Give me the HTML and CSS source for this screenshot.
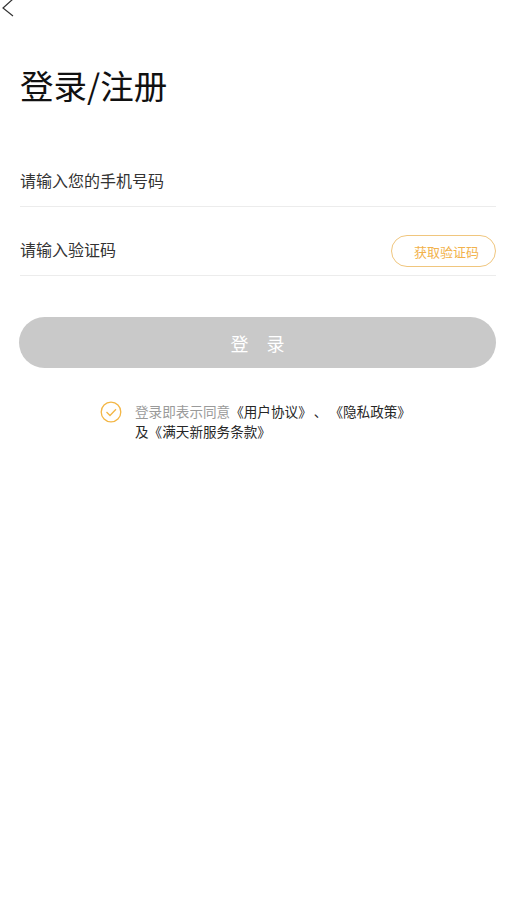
FILE: index.html
```html
<!DOCTYPE html>
<html lang="zh-CN">
<head>
<meta charset="utf-8">
<title>登录/注册</title>
<link rel="stylesheet" href="styles.css">
</head>
<body>
<div class="page">
  <div class="topbar">
    <svg class="back" width="16" height="18" viewBox="0 0 16 18"><path d="M13 -1 L3 8 L13 16" fill="none" stroke="#333" stroke-width="1.2"/></svg>
  </div>
  <h1 class="title">登录/注册</h1>
  <div class="form">
    <div class="field">
      <span class="placeholder">请输入您的手机号码</span>
    </div>
    <div class="field">
      <span class="placeholder">请输入验证码</span>
      <span class="code-btn">获取验证码</span>
    </div>
    <div class="login-btn"><span>登</span><span>录</span></div>
  </div>
  <div class="agree">
    <svg class="check" width="22" height="22" viewBox="0 0 22 22"><circle cx="11" cy="11" r="9.8" fill="none" stroke="#f3b645" stroke-width="1.3"/><path d="M6.5 11 L10 14.5 L16 8.2" fill="none" stroke="#f3b645" stroke-width="1.3"/></svg>
    <p class="agree-text"><span class="muted">登录即表示同意</span>《用户协议》<span class="comma">、</span>《隐私政策》<br>及《满天新服务条款》</p>
  </div>
</div>
</body>
</html>
```

FILE: styles.css
```css
* { box-sizing: border-box; }
html, body { margin: 0; padding: 0; background: #fff; }
body {
  font-family: "Noto Sans CJK SC", "Noto Sans", sans-serif;
  color: #333;
  text-spacing-trim: space-all;
  font-feature-settings: "halt" 0, "chws" 0;
}
.page { width: 510px; min-height: 911px; }
.topbar { height: 20px; }
.back { display: block; }
.title {
  margin: 0;
  padding: 41px 0 0 20px;
  height: 118px;
  font-size: 33.5px;
  line-height: 48px;
  font-weight: 400;
  color: #111;
}
.form { padding: 0 14px 0 20px; }
.field {
  display: flex;
  align-items: center;
  justify-content: space-between;
  height: 69px;
  padding: 28px 0 8px;
  border-bottom: 1px solid #ececec;
}
.placeholder { font-size: 16px; line-height: 28px; padding-bottom: 4px; color: #333; }
.code-btn {
  width: 105px;
  height: 32px;
  padding-left: 6px;
  border: 1px solid #f0c67e;
  border-radius: 16px;
  color: #f2b24c;
  font-size: 13px;
  display: flex;
  align-items: center;
  justify-content: center;
}
.login-btn {
  margin: 41px 0 0 -1px;
  height: 51px;
  border-radius: 26px;
  background: #c9c9c9;
  color: #fff;
  font-size: 18px;
  display: flex;
  align-items: center;
  justify-content: center;
  gap: 18px;
}
.agree {
  display: flex;
  justify-content: center;
  align-items: flex-start;
  gap: 13px;
  margin-top: 33px;
  padding-left: 1px;
}
.check { flex: none; margin-top: 0; }
.agree-text {
  margin: 0;
  font-size: 13.6px;
  line-height: 20px;
  color: #262626;
}
.comma { display: inline-block; width: 1.3em; text-align: center; }
.muted { color: #9a9a9a; }
```
